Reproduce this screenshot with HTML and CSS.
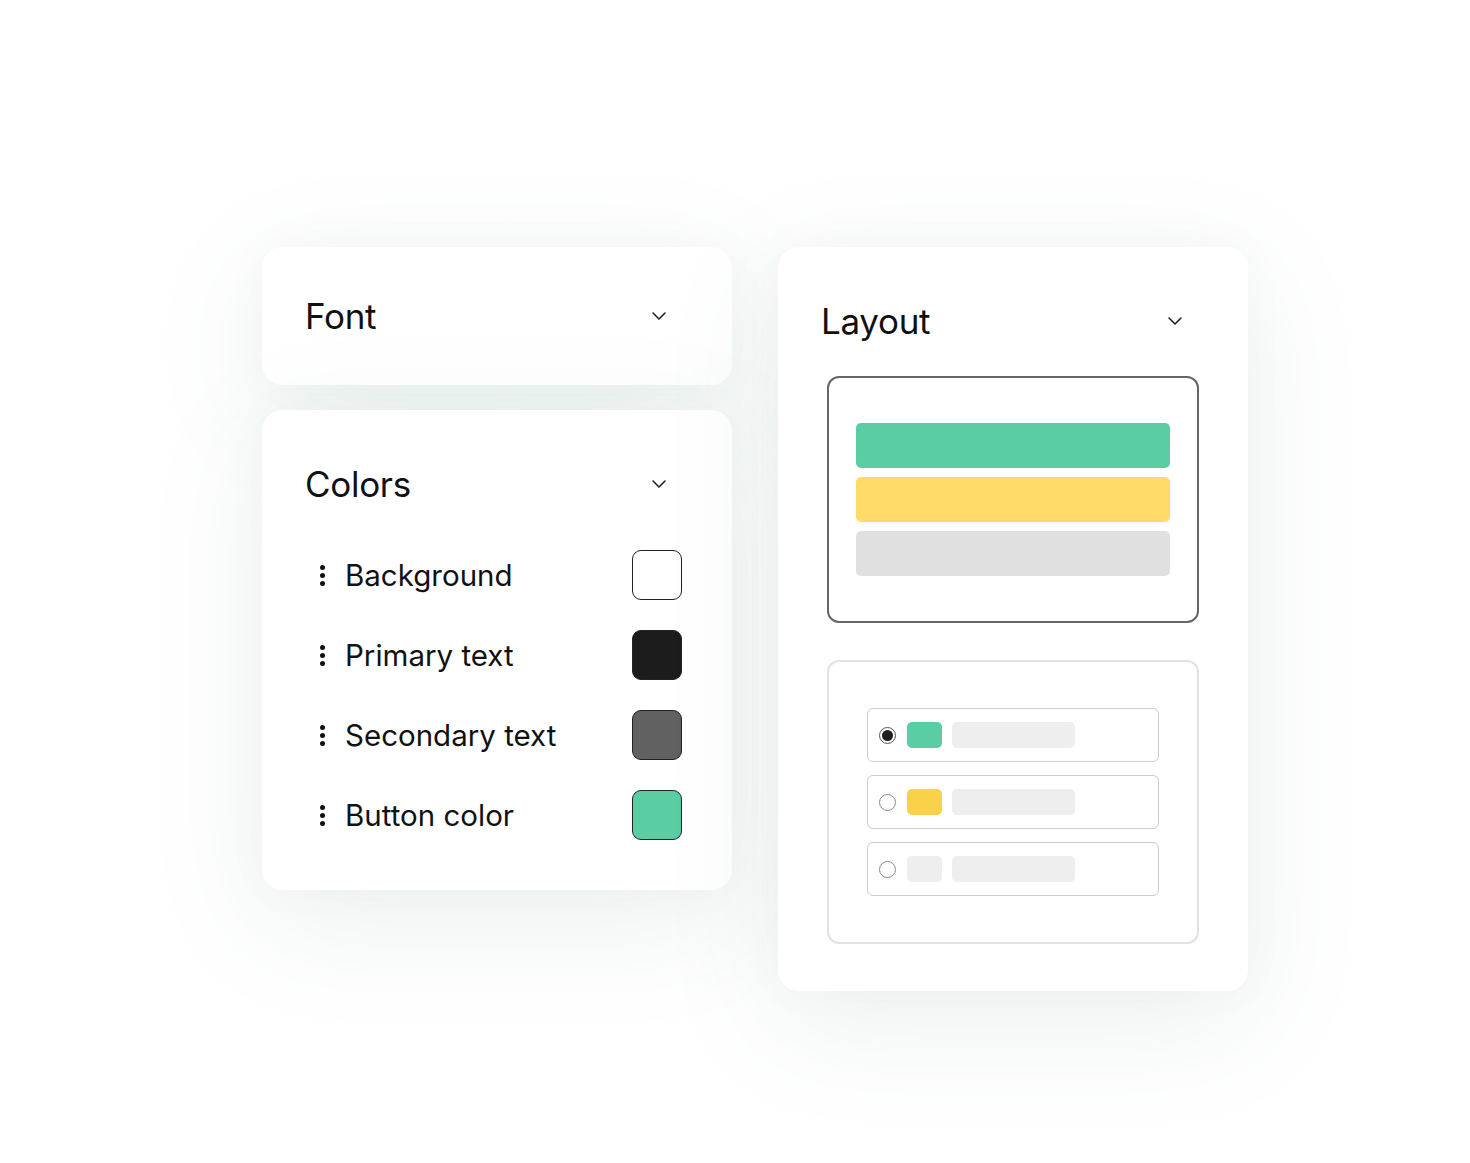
FILE: index.html
```html
<!DOCTYPE html>
<html>
<head>
<meta charset="utf-8">
<link rel="stylesheet" href="styles.css">
</head>
<body>
<div class="stage">
  <div class="col">
    <div class="card card-font">
      <div class="head">
        <span class="title">Font</span>
        <svg class="chev" viewBox="0 0 24 24" width="24" height="24"><path d="M6 9l6 6 6-6" fill="none" stroke="#222" stroke-width="1.6" stroke-linecap="round" stroke-linejoin="round"/></svg>
      </div>
    </div>
    <div class="card card-colors">
      <div class="head">
        <span class="title">Colors</span>
        <svg class="chev" viewBox="0 0 24 24" width="24" height="24"><path d="M6 9l6 6 6-6" fill="none" stroke="#222" stroke-width="1.6" stroke-linecap="round" stroke-linejoin="round"/></svg>
      </div>
      <div class="rows">
        <div class="row"><span class="dots"><i></i><i></i><i></i></span><span class="label">Background</span><span class="sw sw-white"></span></div>
        <div class="row"><span class="dots"><i></i><i></i><i></i></span><span class="label">Primary text</span><span class="sw sw-black"></span></div>
        <div class="row"><span class="dots"><i></i><i></i><i></i></span><span class="label">Secondary text</span><span class="sw sw-gray"></span></div>
        <div class="row"><span class="dots"><i></i><i></i><i></i></span><span class="label">Button color</span><span class="sw sw-green"></span></div>
      </div>
    </div>
  </div>
  <div class="col">
    <div class="card card-layout">
      <div class="head">
        <span class="title">Layout</span>
        <svg class="chev" viewBox="0 0 24 24" width="24" height="24"><path d="M6 9l6 6 6-6" fill="none" stroke="#222" stroke-width="1.6" stroke-linecap="round" stroke-linejoin="round"/></svg>
      </div>
      <div class="preview">
        <div class="bar bar-green"></div>
        <div class="bar bar-yellow"></div>
        <div class="bar bar-gray"></div>
      </div>
      <div class="options">
        <div class="opt"><span class="radio on"></span><span class="chip chip-green"></span><span class="ph"></span></div>
        <div class="opt"><span class="radio"></span><span class="chip chip-yellow"></span><span class="ph"></span></div>
        <div class="opt"><span class="radio"></span><span class="chip chip-gray"></span><span class="ph"></span></div>
      </div>
    </div>
  </div>
</div>
</body>
</html>
```
FILE: styles.css
```css
html, body {
  margin: 0;
  padding: 0;
  background: #ffffff;
}
body {
  width: 1470px;
  height: 1163px;
  overflow: hidden;
  font-family: Inter, "Liberation Sans", sans-serif;
  color: #111;
}
.stage {
  display: flex;
  gap: 46px;
  align-items: flex-start;
  padding: 247px 0 0 262px;
}
.col {
  display: flex;
  flex-direction: column;
  gap: 25px;
  width: 470px;
}
.card {
  background: #fff;
  border-radius: 21px;
  box-shadow: 0 30px 120px rgba(70, 130, 105, 0.11), 0 0 40px rgba(70, 130, 105, 0.04);
  box-sizing: border-box;
}
.head {
  display: flex;
  align-items: center;
  justify-content: space-between;
  height: 40px;
  padding: 0 61px 0 43px;
}
.title {
  font-size: 35px;
  line-height: 40px;
  letter-spacing: -0.3px;
}
.chev { display: block; }
.card-font {
  height: 138px;
  padding-top: 49px;
}
.card-colors {
  height: 480px;
  padding-top: 54px;
}
.rows {
  display: flex;
  flex-direction: column;
  gap: 30px;
  margin-top: 46px;
  padding: 0 50px 0 58px;
}
.row {
  display: flex;
  align-items: center;
  height: 50px;
}
.dots {
  display: flex;
  flex-direction: column;
  gap: 3px;
  width: 5px;
  margin-right: 20px;
}
.dots i {
  display: block;
  width: 5px;
  height: 5px;
  border-radius: 50%;
  background: #111;
}
.label {
  flex: 1;
  font-size: 29.5px;
  line-height: 36px;
  letter-spacing: 0;
}
.sw {
  width: 50px;
  height: 50px;
  box-sizing: border-box;
  border: 1.5px solid #222;
  border-radius: 9px;
}
.sw-white { background: #fff; }
.sw-black { background: #1c1c1c; }
.sw-gray { background: #616161; }
.sw-green { background: #5acea2; }

.card-layout {
  height: 744px;
  padding-top: 54px;
}
.preview {
  margin: 35px 49px 0 49px;
  height: 247px;
  box-sizing: border-box;
  border: 2px solid #666;
  border-radius: 12px;
  padding: 45px 27px;
  display: flex;
  flex-direction: column;
  gap: 9px;
}
.bar {
  height: 45px;
  border-radius: 5px;
}
.bar-green { background: #5acea2; }
.bar-yellow { background: #ffdc6a; }
.bar-gray { background: #e0e0e0; }
.options {
  margin: 37px 49px 0 49px;
  height: 284px;
  box-sizing: border-box;
  border: 2px solid #e2e2e2;
  border-radius: 12px;
  padding: 46px 38px;
  display: flex;
  flex-direction: column;
  gap: 13px;
}
.opt {
  height: 54px;
  box-sizing: border-box;
  border: 1px solid #cccccc;
  border-radius: 6px;
  display: flex;
  align-items: center;
  padding-left: 11px;
}
.radio {
  width: 17px;
  height: 17px;
  box-sizing: border-box;
  border: 1px solid #8a8a8a;
  border-radius: 50%;
  background: #fff;
  margin-right: 11px;
  position: relative;
}
.radio.on {
  border-color: #555;
}
.radio.on::after {
  content: "";
  position: absolute;
  left: 2px;
  top: 2px;
  width: 11px;
  height: 11px;
  border-radius: 50%;
  background: #1e1e1e;
}
.chip {
  width: 35px;
  height: 26px;
  border-radius: 5px;
  margin-right: 10px;
}
.chip-green { background: #5acea2; }
.chip-yellow { background: #fad24a; }
.chip-gray { background: #eeeeee; }
.ph {
  width: 123px;
  height: 26px;
  border-radius: 5px;
  background: #eeeeee;
}
```
